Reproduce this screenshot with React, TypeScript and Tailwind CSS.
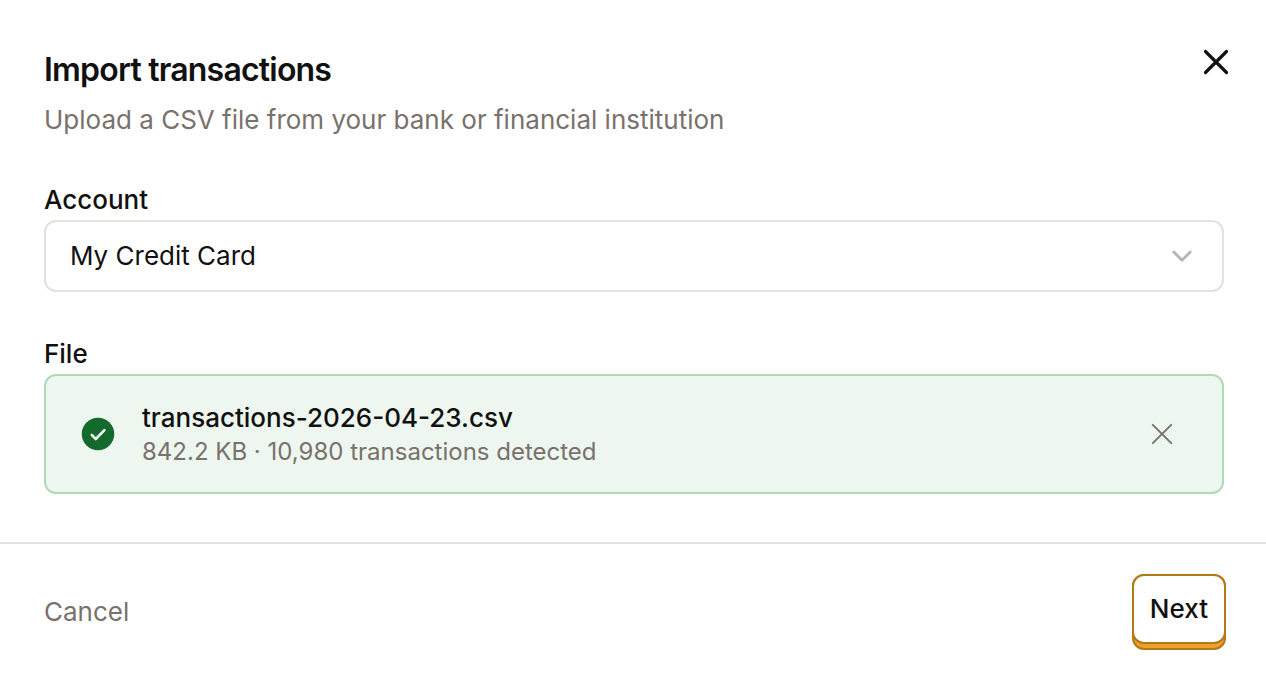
import { useState } from "react";

export default function App() {
  const [account, setAccount] = useState("card");
  return (
    <main className="w-full bg-white font-['Inter',sans-serif] text-[26px] leading-8 text-[#111111]">
      <div className="py-12 pr-[42px] pl-11">
        <header className="flex items-start justify-between">
          <div>
            <h1 className="text-[32px] leading-11 font-semibold tracking-tight">Import transactions</h1>
            <p className="mt-3 text-[#78716c]">Upload a CSV file from your bank or financial institution</p>
          </div>
          <button type="button" aria-label="Close" className="-mr-1.5">
            <svg width="28" height="28" viewBox="0 0 28 28" fill="none" stroke="currentColor" strokeWidth="3.2" strokeLinecap="round">
              <path d="M3.5 3.5 24.5 24.5M24.5 3.5 3.5 24.5" />
            </svg>
          </button>
        </header>
        <div className="mt-12">
          <label htmlFor="account" className="block font-medium">Account</label>
          <div className="mt-1 grid items-center">
            <select
              id="account"
              value={account}
              onChange={(e) => setAccount(e.target.value)}
              className="col-start-1 row-start-1 h-[72px] w-full appearance-none rounded-xl border-2 border-[#e2e2de] bg-white px-6"
            >
              <option value="card">My Credit Card</option>
            </select>
            <svg className="pointer-events-none col-start-1 row-start-1 mr-8 justify-self-end" width="20" height="20" viewBox="0 0 20 20" fill="none" stroke="#b5b5b2" strokeWidth="2.8" strokeLinecap="round" strokeLinejoin="round">
              <path d="m1.8 6 8.2 8.2L18.2 6" />
            </svg>
          </div>
        </div>
        <section aria-labelledby="file" className="mt-[46px]">
          <h2 id="file" className="font-medium">File</h2>
          <div className="mt-1 flex items-center rounded-xl border-2 border-[#b0d9b6] bg-[#edf7ef] py-6 pr-12 pl-9">
            <svg className="overflow-visible" width="32" height="32" viewBox="0 0 32 32" fill="none">
              <circle cx="16" cy="16" r="16.25" fill="#14692d" />
              <path d="m9.8 17 4 4 8.6-8.8" stroke="#edf7ef" strokeWidth="2.6" strokeLinecap="round" strokeLinejoin="round" />
            </svg>
            <div className="ml-7 flex-1">
              <p className="leading-9 font-medium">transactions-2026-04-23.csv</p>
              <p className="text-2xl text-[#78716c]">842.2 KB · 10,980 transactions detected</p>
            </div>
            <button type="button" aria-label="Remove file">
              <svg width="24" height="24" viewBox="0 0 24 24" fill="none" stroke="#78716c" strokeWidth="1.9" strokeLinecap="round">
                <path d="M2.8 2.8 21.2 21.2M21.2 2.8 2.8 21.2" />
              </svg>
            </button>
          </div>
        </section>
      </div>
      <footer className="flex items-center justify-between border-t-2 border-[#e2e2de] py-[30px] pr-10 pl-11">
        <button type="button" className="text-[#78716c]">Cancel</button>
        <button type="button" className="rounded-xl border-2 border-[#b27a18] bg-[#ee9f2d] pb-1 font-medium">
          <span className="-mx-0.5 -mt-0.5 flex h-[70px] items-center rounded-xl border-2 border-[#b27a18] bg-white px-4">Next</span>
        </button>
      </footer>
    </main>
  );
}
